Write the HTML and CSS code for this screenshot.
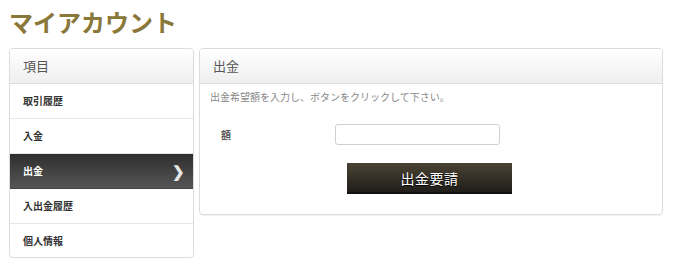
FILE: index.html
```html
<!DOCTYPE html>
<html lang="ja">
<head>
<meta charset="utf-8">
<title>マイアカウント</title>
<link rel="stylesheet" href="styles.css">
</head>
<body>
<div class="page">
  <h1 class="title">マイアカウント</h1>
  <div class="layout">
    <nav class="side">
      <div class="side-head">項目</div>
      <a class="side-item">取引履歴</a>
      <a class="side-item">入金</a>
      <a class="side-item active">出金<span class="chev">❯</span></a>
      <a class="side-item">入出金履歴</a>
      <a class="side-item last">個人情報</a>
    </nav>
    <section class="main">
      <div class="main-head">出金</div>
      <div class="main-body">
        <p class="desc">出金希望額を入力し、ボタンをクリックして下さい。</p>
        <div class="form-row">
          <label class="label">額</label>
          <input class="field" type="text">
        </div>
        <div class="btn-row">
          <button class="btn">出金要請</button>
        </div>
      </div>
    </section>
  </div>
</div>
</body>
</html>
```
FILE: styles.css
```css
* { box-sizing: border-box; }
html, body { margin: 0; padding: 0; background: #fff; }
body {
  font-family: "Noto Sans CJK JP", "Noto Sans", "Liberation Sans", sans-serif;
  color: #333;
}
.page { padding: 5px 11px 0 9px; width: 674px; }
.title {
  margin: 0;
  font-size: 24px;
  line-height: 34px;
  font-weight: bold;
  color: #8a773a;
  letter-spacing: 0;
}
.layout {
  display: flex;
  gap: 5px;
  margin-top: 9px;
  align-items: flex-start;
}
.side {
  width: 185px;
  border: 1px solid #dcdcdc;
  border-radius: 4px;
  overflow: hidden;
  box-shadow: 0 1px 1px rgba(0,0,0,0.06);
  display: flex;
  flex-direction: column;
}
.side-head, .main-head {
  height: 35px;
  line-height: 34px;
  padding-left: 13px;
  font-size: 13px;
  color: #555;
  background: linear-gradient(#ffffff, #efefef);
  border-bottom: 1px solid #dcdcdc;
}
.side-item {
  position: relative;
  display: block;
  height: 35px;
  line-height: 34px;
  padding-left: 13px;
  font-size: 10px;
  font-weight: bold;
  color: #333;
  border-bottom: 1px solid #e6e6e6;
}
.side-item.last { border-bottom: none; height: 33px; }
.side-item.active {
  color: #fff;
  background: linear-gradient(#2e2e2e, #565656);
  border-bottom-color: #444;
}
.chev {
  position: absolute;
  right: 8px;
  top: 0;
  font-size: 15px;
  font-weight: bold;
  color: #e6e6e6;
}
.main {
  flex: 1;
  border: 1px solid #dcdcdc;
  border-radius: 4px;
  overflow: hidden;
  box-shadow: 0 1px 1px rgba(0,0,0,0.06);
}
.main-head { padding-left: 13px; }
.main-body { padding: 6px 10px 20px 10px; }
.desc {
  margin: 0;
  font-size: 10px;
  line-height: 14px;
  color: #888;
}
.form-row {
  display: flex;
  align-items: center;
  margin-top: 20px;
  height: 20px;
}
.label {
  width: 125px;
  padding-left: 11px;
  font-size: 10px;
  font-weight: bold;
  color: #555;
}
.field {
  width: 165px;
  height: 21px;
  border: 1px solid #cfcfcf;
  border-radius: 3px;
  padding: 2px 4px;
  font-size: 11px;
  outline: none;
}
.btn-row { margin-top: 19px; padding-left: 137px; }
.btn {
  display: block;
  width: 165px;
  height: 31px;
  border: none;
  border-bottom: 2px solid #111;
  background: linear-gradient(#4a4334, #201e1b);
  color: #fff;
  font-family: inherit;
  font-size: 14px;
  letter-spacing: 0.5px;
  text-shadow: 0 1px 1px #000;
  cursor: pointer;
  padding: 0;
}
```
